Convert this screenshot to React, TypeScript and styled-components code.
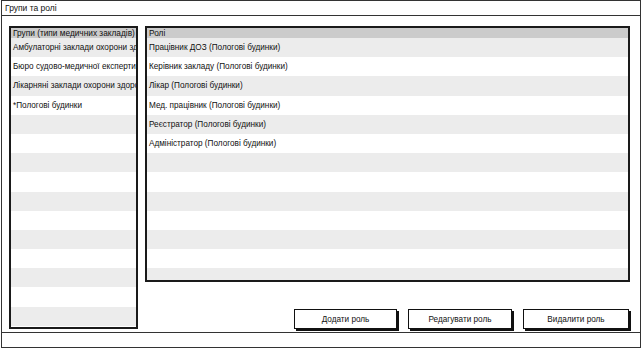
import React from 'react'
import styled, { createGlobalStyle } from 'styled-components'

const GlobalStyle = createGlobalStyle`
  html, body {
    margin: 0;
    padding: 0;
    background: #fff;
  }
  body {
    font-family: 'Liberation Sans', Arial, sans-serif;
    color: #111;
  }
`

const StyledWindow = styled.div`
  width: 642px;
  height: 349px;
  box-sizing: border-box;
  display: flex;
  flex-direction: column;
  padding: 0 1px 1px 1px;
`

const StyledFrame = styled.div`
  flex: 1;
  display: flex;
  flex-direction: column;
  border: 1px solid #333;
  min-height: 0;
`

const StyledTitleBar = styled.div`
  height: 14px;
  border-bottom: 1px solid #333;
  font-size: 8.5px;
  line-height: 14px;
  padding-left: 3px;
`

const StyledBody = styled.div`
  flex: 1;
  display: grid;
  grid-template-columns: 129px 485px;
  column-gap: 7px;
  padding: 10px 0 9px 7px;
  min-height: 0;
`

const StyledStatusBar = styled.div`
  height: 14px;
  border: 1px solid #333;
  border-top: none;
`

const StyledPanel = styled.div<{ height?: number }>`
  box-sizing: border-box;
  border: 2px solid #1a1a1a;
  height: ${(p) => (p.height ? `${p.height}px` : '100%')};
  overflow: hidden;
  background: #fff;
`

const StyledHeader = styled.div`
  height: 10px;
  line-height: 10px;
  background: #cbcbcb;
  font-size: 8.3px;
  padding-left: 2px;
  white-space: nowrap;
  overflow: hidden;
`

const StyledRow = styled.div<{ shaded: boolean }>`
  height: 19.2px;
  line-height: 19.2px;
  background: ${(p) => (p.shaded ? '#ececec' : '#fff')};
  font-size: 8.2px;
  padding-left: 2px;
  white-space: nowrap;
  overflow: hidden;
`

const StyledRightColumn = styled.div`
  display: flex;
  flex-direction: column;
`

const StyledButtonRow = styled.div`
  display: flex;
  justify-content: flex-end;
  gap: 11px;
  margin-top: 27px;
  padding-right: 1px;
`

const StyledButton = styled.button<{ w: number }>`
  box-sizing: border-box;
  width: ${(p) => p.w}px;
  height: 20px;
  border: 1px solid #111;
  box-shadow: 2px 2px 0 #111;
  background: #fff;
  font-family: 'Liberation Sans', Arial, sans-serif;
  font-size: 8.2px;
  color: #111;
  padding: 0;
`

const groups = [
  'Амбулаторні заклади охорони здоров\u2019я',
  'Бюро судово-медичної експертизи',
  'Лікарняні заклади охорони здоров\u2019я',
  '*Пологові будинки',
]

const roles = [
  'Працівник ДОЗ (Пологові будинки)',
  'Керівник закладу (Пологові будинки)',
  'Лікар (Пологові будинки)',
  'Мед. працівник (Пологові будинки)',
  'Реєстратор (Пологові будинки)',
  'Адміністратор (Пологові будинки)',
]

const fill = (items: string[], count: number) =>
  Array.from({ length: count }, (_, i) => items[i] ?? '')

const App = () => {
  return (
    <>
      <GlobalStyle />
      <StyledWindow>
        <StyledFrame>
          <StyledTitleBar>Групи та ролі</StyledTitleBar>
          <StyledBody>
            <StyledPanel>
              <StyledHeader>Групи (типи медичних закладів)</StyledHeader>
              {fill(groups, 16).map((g, i) => (
                <StyledRow key={i} shaded={i % 2 === 0}>
                  {g}
                </StyledRow>
              ))}
            </StyledPanel>
            <StyledRightColumn>
              <StyledPanel height={256}>
                <StyledHeader>Ролі</StyledHeader>
                {fill(roles, 14).map((r, i) => (
                  <StyledRow key={i} shaded={i % 2 === 0}>
                    {r}
                  </StyledRow>
                ))}
              </StyledPanel>
              <StyledButtonRow>
                <StyledButton w={103}>Додати роль</StyledButton>
                <StyledButton w={104}>Редагувати роль</StyledButton>
                <StyledButton w={106}>Видалити роль</StyledButton>
              </StyledButtonRow>
            </StyledRightColumn>
          </StyledBody>
        </StyledFrame>
        <StyledStatusBar />
      </StyledWindow>
    </>
  )
}

export default App
